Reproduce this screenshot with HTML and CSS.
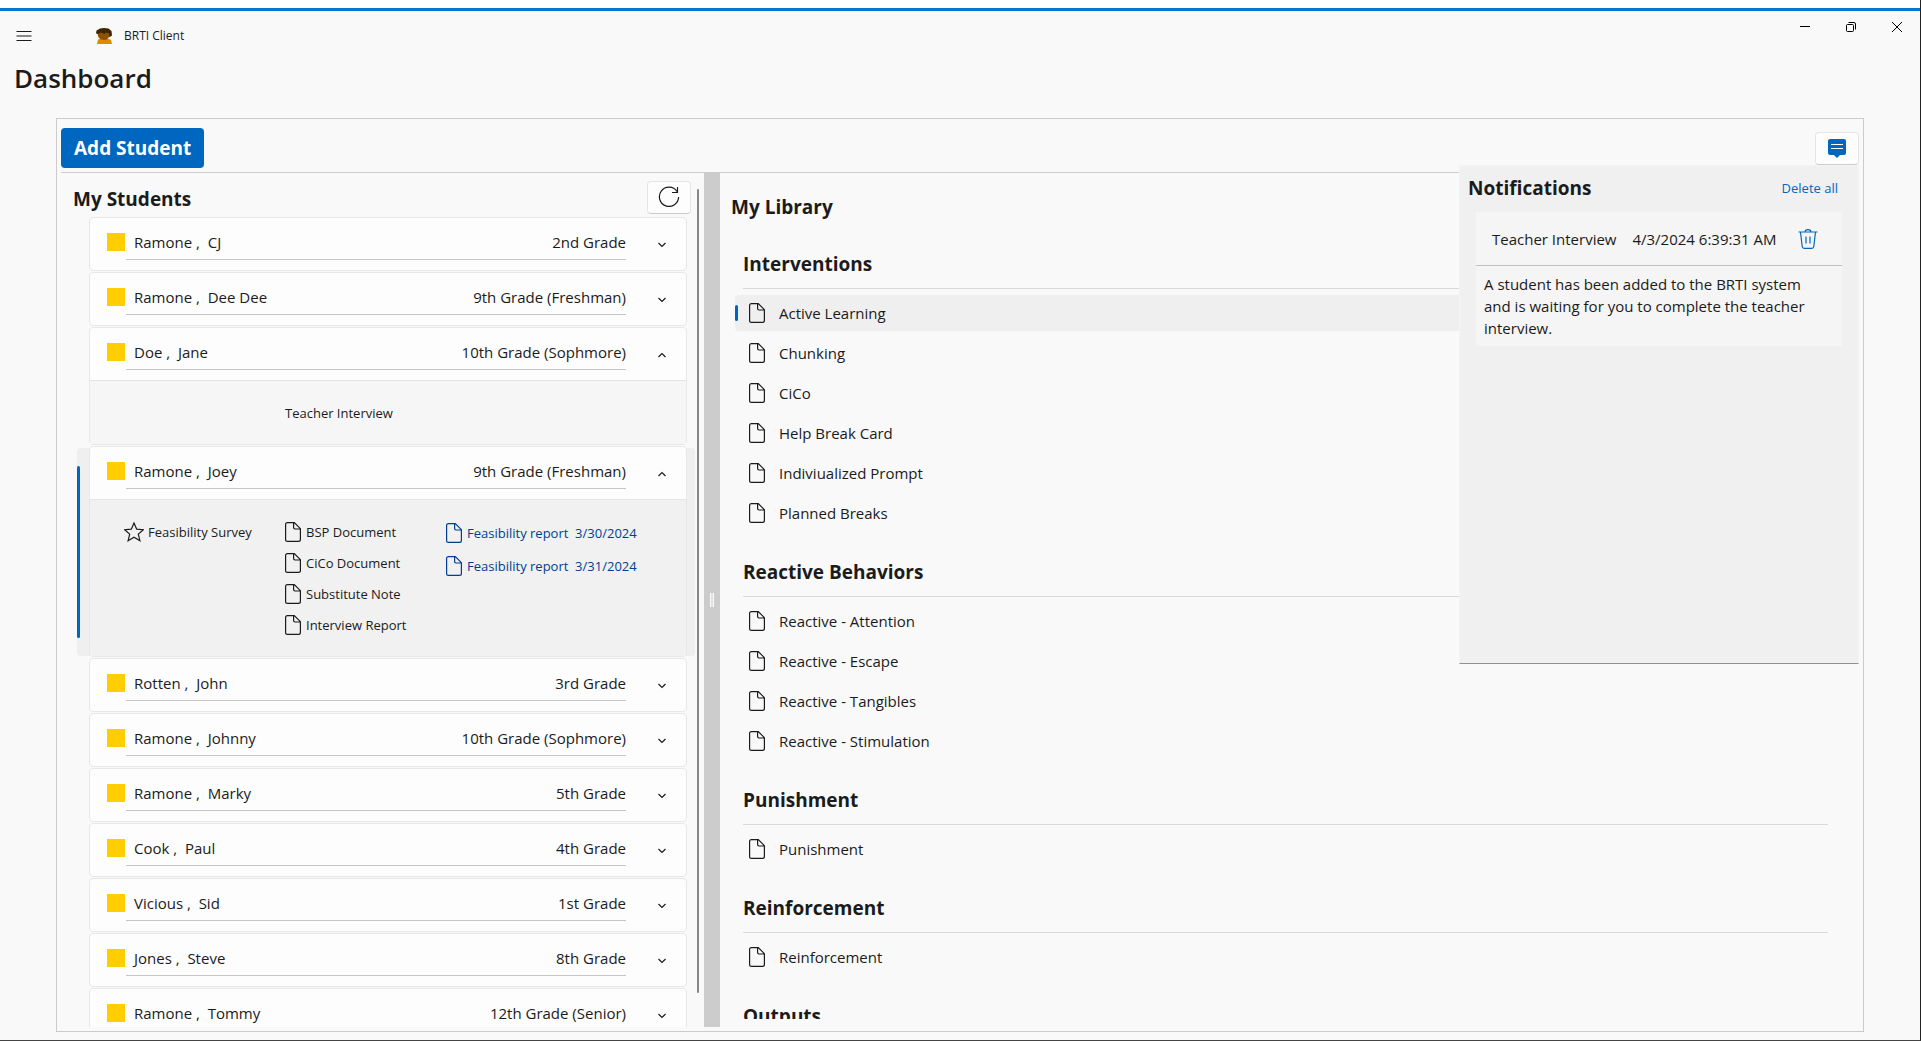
FILE: index.html
```html
<!DOCTYPE html>
<html lang="en">
<head>
    <meta charset="UTF-8">
    <meta name="viewport" content="width=device-width, initial-scale=1.0">
    <title>BRTI Client</title>
    <link rel="stylesheet" href="styles.css">
</head>
<body>
    <svg class="sprite" aria-hidden="true">
        <symbol id="i-doc" viewBox="0 0 16 20">
            <path d="M2.500 0.600H9.300L15.400 6.700V17.500Q15.400 19.400 13.500 19.400H2.500Q0.600 19.400 0.600 17.500V2.500Q0.600 0.600 2.500 0.600ZM8.600 0.600V5.600Q8.600 7 10 7H15.400"/>
        </symbol>
        <symbol id="i-down" viewBox="0 0 10 6">
            <path d="M1.500 1L5 4.500L8.500 1"/>
        </symbol>
        <symbol id="i-up" viewBox="0 0 10 6">
            <path d="M1.500 5L5 1.500L8.500 5"/>
        </symbol>
    </svg>

    <header class="title-bar">
        <button class="menu-btn" aria-label="Menu">
            <svg width="16" height="12" viewBox="0 0 16 12"><path d="M0.500 1.500H15.500M0.500 6H15.500M0.500 10.500H15.500"/></svg>
        </button>
        <svg class="app-icon" width="16" height="16" viewBox="0 0 16 16">
            <path fill="#e08a00" d="M1 16L2 11.500L5 10.500H12L15 12L16 16Z"/>
            <path fill="#8f5200" d="M1.500 4H14V7.500Q14 9 12.500 9.500Q11.500 12 8 12Q4.500 12 3 10Q1.500 8 1.500 4Z"/>
            <path fill="#3d2600" d="M0 5.500L0.500 2.500L4 0.500L8 0L12.500 0.500L15.500 3L16 7.500L14.500 8.500L13.500 9.500L13 5.500L10 4.500L8.500 6L5 4.500L2 6Z"/>
        </svg>
        <span class="app-name">BRTI Client</span>
        <div class="window-btns">
            <button aria-label="Minimize"><svg width="10" height="10" viewBox="0 0 10 10"><path d="M0 4.500H10"/></svg></button>
            <button aria-label="Restore"><svg width="10" height="10" viewBox="0 0 10 10"><rect x="0.500" y="2.500" width="7" height="7" rx="1"/><path d="M2.500 0.500H8Q9.500 0.500 9.500 2V7.500"/></svg></button>
            <button aria-label="Close"><svg width="10" height="10" viewBox="0 0 10 10"><path d="M0 0L10 10M10 0L0 10"/></svg></button>
        </div>
    </header>

    <h1>Dashboard</h1>

    <main class="panel">
        <div class="toolbar">
            <button class="add-btn">Add Student</button>
            <button class="icon-btn notify-btn" aria-label="Notifications">
                <svg width="18" height="19" viewBox="0 0 18 19">
                    <path fill="#0067c0" d="M2 0H16Q18 0 18 2V14Q18 16 16 16H12L9 19L6 16H2Q0 16 0 14V2Q0 0 2 0Z"/>
                    <path stroke="#fff" d="M3 5.500H15M3 9.500H15"/>
                </svg>
            </button>
        </div>

        <div class="columns">
            <section class="students">
                <div class="students-head">
                    <h2>My Students</h2>
                    <button class="icon-btn" aria-label="Refresh">
                        <svg width="22" height="22" viewBox="0 0 22 22"><path d="M19 5.500A9.600 9.600 0 1 0 20.600 11M19.500 1V6.500H14"/></svg>
                    </button>
                </div>
                <ul class="student-list">
                    <li>
                        <div class="card">
                            <div class="card-head"><i class="swatch"></i><div class="card-line"><span>Ramone ,&nbsp; CJ</span><span>2nd Grade</span></div><button aria-label="Expand"><svg><use href="#i-down"/></svg></button></div>
                        </div>
                    </li>
                    <li>
                        <div class="card">
                            <div class="card-head"><i class="swatch"></i><div class="card-line"><span>Ramone ,&nbsp; Dee Dee</span><span>9th Grade (Freshman)</span></div><button aria-label="Expand"><svg><use href="#i-down"/></svg></button></div>
                        </div>
                    </li>
                    <li>
                        <div class="card">
                            <div class="card-head"><i class="swatch"></i><div class="card-line"><span>Doe ,&nbsp; Jane</span><span>10th Grade (Sophmore)</span></div><button aria-label="Collapse"><svg><use href="#i-up"/></svg></button></div>
                            <div class="card-body">
                                <div></div>
                                <div><button class="doc-btn">Teacher Interview</button></div>
                            </div>
                        </div>
                    </li>
                    <li class="selected">
                        <div class="card">
                            <div class="card-head"><i class="swatch"></i><div class="card-line"><span>Ramone ,&nbsp; Joey</span><span>9th Grade (Freshman)</span></div><button aria-label="Collapse"><svg><use href="#i-up"/></svg></button></div>
                            <div class="card-body">
                                <div>
                                    <button class="doc-btn survey-btn"><svg viewBox="0 0 20 20"><path d="M10 1L12.700 7.200L19.300 7.700L14.300 12.100L15.900 18.700L10 15.200L4.100 18.700L5.700 12.100L0.700 7.700L7.300 7.200Z"/></svg>Feasibility Survey</button>
                                </div>
                                <div>
                                    <button class="doc-btn"><svg><use href="#i-doc"/></svg>BSP Document</button>
                                    <button class="doc-btn"><svg><use href="#i-doc"/></svg>CiCo Document</button>
                                    <button class="doc-btn"><svg><use href="#i-doc"/></svg>Substitute Note</button>
                                    <button class="doc-btn"><svg><use href="#i-doc"/></svg>Interview Report</button>
                                </div>
                                <div class="reports">
                                    <a class="doc-btn" href="#"><svg><use href="#i-doc"/></svg>Feasibility report&nbsp; 3/30/2024</a>
                                    <a class="doc-btn" href="#"><svg><use href="#i-doc"/></svg>Feasibility report&nbsp; 3/31/2024</a>
                                </div>
                            </div>
                        </div>
                    </li>
                    <li>
                        <div class="card">
                            <div class="card-head"><i class="swatch"></i><div class="card-line"><span>Rotten ,&nbsp; John</span><span>3rd Grade</span></div><button aria-label="Expand"><svg><use href="#i-down"/></svg></button></div>
                        </div>
                    </li>
                    <li>
                        <div class="card">
                            <div class="card-head"><i class="swatch"></i><div class="card-line"><span>Ramone ,&nbsp; Johnny</span><span>10th Grade (Sophmore)</span></div><button aria-label="Expand"><svg><use href="#i-down"/></svg></button></div>
                        </div>
                    </li>
                    <li>
                        <div class="card">
                            <div class="card-head"><i class="swatch"></i><div class="card-line"><span>Ramone ,&nbsp; Marky</span><span>5th Grade</span></div><button aria-label="Expand"><svg><use href="#i-down"/></svg></button></div>
                        </div>
                    </li>
                    <li>
                        <div class="card">
                            <div class="card-head"><i class="swatch"></i><div class="card-line"><span>Cook ,&nbsp; Paul</span><span>4th Grade</span></div><button aria-label="Expand"><svg><use href="#i-down"/></svg></button></div>
                        </div>
                    </li>
                    <li>
                        <div class="card">
                            <div class="card-head"><i class="swatch"></i><div class="card-line"><span>Vicious ,&nbsp; Sid</span><span>1st Grade</span></div><button aria-label="Expand"><svg><use href="#i-down"/></svg></button></div>
                        </div>
                    </li>
                    <li>
                        <div class="card">
                            <div class="card-head"><i class="swatch"></i><div class="card-line"><span>Jones ,&nbsp; Steve</span><span>8th Grade</span></div><button aria-label="Expand"><svg><use href="#i-down"/></svg></button></div>
                        </div>
                    </li>
                    <li>
                        <div class="card">
                            <div class="card-head"><i class="swatch"></i><div class="card-line"><span>Ramone ,&nbsp; Tommy</span><span>12th Grade (Senior)</span></div><button aria-label="Expand"><svg><use href="#i-down"/></svg></button></div>
                        </div>
                    </li>
                </ul>
                <div class="scroll-thumb"></div>
            </section>

            <div class="splitter"><span class="grip"></span></div>

            <section class="library">
                <h2>My Library</h2>
                <h3>Interventions</h3>
                <ul>
                    <li class="active"><svg><use href="#i-doc"/></svg>Active Learning</li>
                    <li><svg><use href="#i-doc"/></svg>Chunking</li>
                    <li><svg><use href="#i-doc"/></svg>CiCo</li>
                    <li><svg><use href="#i-doc"/></svg>Help Break Card</li>
                    <li><svg><use href="#i-doc"/></svg>Indiviualized Prompt</li>
                    <li><svg><use href="#i-doc"/></svg>Planned Breaks</li>
                </ul>
                <h3>Reactive Behaviors</h3>
                <ul>
                    <li><svg><use href="#i-doc"/></svg>Reactive - Attention</li>
                    <li><svg><use href="#i-doc"/></svg>Reactive - Escape</li>
                    <li><svg><use href="#i-doc"/></svg>Reactive - Tangibles</li>
                    <li><svg><use href="#i-doc"/></svg>Reactive - Stimulation</li>
                </ul>
                <h3>Punishment</h3>
                <ul>
                    <li><svg><use href="#i-doc"/></svg>Punishment</li>
                </ul>
                <h3>Reinforcement</h3>
                <ul>
                    <li><svg><use href="#i-doc"/></svg>Reinforcement</li>
                </ul>
                <h3>Outputs</h3>
            </section>
        </div>

        <aside class="notifications">
            <div class="notifications-head">
                <h2>Notifications</h2>
                <button class="link-btn">Delete all</button>
            </div>
            <article class="note">
                <div class="note-head">
                    <span>Teacher Interview</span>
                    <time>4/3/2024 6:39:31 AM</time>
                    <button aria-label="Delete">
                        <svg width="20" height="20" viewBox="0 0 20 20"><path d="M0.500 3H19.500M7 3Q7 0.700 10 0.700Q13 0.700 13 3M2.500 3L4.200 17.500Q4.500 19.300 6.200 19.300H13.800Q15.500 19.300 15.800 17.500L17.500 3M8 7.500V14.500M12 7.500V14.500"/></svg>
                    </button>
                </div>
                <p>A student has been added to the BRTI system and is waiting for you to complete the teacher interview.</p>
            </article>
        </aside>
    </main>
</body>
</html>
```

FILE: styles.css
```css
* {
    box-sizing: border-box;
}
body {
    display: flex;
    flex-direction: column;
    height: 100vh;
    margin: 0;
    border-right: 1px solid #222;
    border-bottom: 1px solid #444;
    background-color: #f9f9f9;
    color: #1b1b1b;
    font-family: "Open Sans", "Noto Sans", sans-serif;
    font-size: 15px;
    line-height: 20px;
    overflow: hidden;
}
body::before {
    content: "";
    flex: none;
    height: 8px;
    background-color: #fff;
    border-bottom: 3px solid #0078d4;
}
h1, h2, h3, ul, p {
    margin: 0;
    padding: 0;
}
ul {
    list-style: none;
}
svg {
    flex: none;
    fill: none;
    stroke: currentColor;
    stroke-width: 1.2;
}
button {
    padding: 0;
    border: none;
    background: none;
    color: inherit;
    font: inherit;
    cursor: pointer;
}
h2, h3 {
    font-size: 19px;
    line-height: 28px;
    font-weight: bold;
}
.sprite {
    position: absolute;
    width: 0;
    height: 0;
}

/* title bar */
.title-bar {
    display: flex;
    align-items: center;
    flex: none;
    height: 50px;
    padding-left: 16px;
}
.title-bar svg {
    stroke-width: 1;
}
.menu-btn {
    display: flex;
    margin-right: 64px;
}
.title-bar .app-icon {
    stroke: none;
    margin-right: 12px;
}
.app-name {
    font-size: 12px;
}
.window-btns {
    display: flex;
    align-self: flex-start;
    margin-left: auto;
    color: #000;
}
.window-btns button {
    display: flex;
    align-items: center;
    justify-content: center;
    width: 46px;
    height: 32px;
}
h1 {
    flex: none;
    padding-left: 14px;
    font-size: 26px;
    line-height: 34px;
    font-weight: 600;
}

/* dashboard panel */
.panel {
    position: relative;
    display: flex;
    flex-direction: column;
    flex: 1;
    min-height: 0;
    margin: 23px 56px 8px;
    padding: 9px 4px 4px;
    border: 1px solid #ccc;
}
.toolbar {
    display: flex;
    align-items: center;
    justify-content: space-between;
    flex: none;
    padding-bottom: 4px;
    border-bottom: 1px solid #ccc;
}
.add-btn {
    height: 40px;
    padding: 0 13px;
    border-radius: 4px;
    background-color: #0067c0;
    color: #fff;
    font-size: 19px;
    font-weight: bold;
}
.icon-btn {
    display: flex;
    align-items: center;
    justify-content: center;
    width: 44px;
    height: 33px;
    border: 1px solid #e5e5e5;
    border-bottom-color: #ccc;
    border-radius: 4px;
    background-color: #fdfdfd;
}
.notify-btn svg {
    stroke: none;
}
.columns {
    display: flex;
    flex: 1;
    min-height: 0;
}

/* students */
.students {
    position: relative;
    flex: none;
    width: 643px;
    overflow: hidden;
}
.students-head {
    display: flex;
    justify-content: space-between;
    align-items: center;
    height: 44px;
    padding: 4px 13px 0 12px;
}
.students-head h2 {
    padding-top: 4px;
}
.student-list {
    padding: 0 9px 0 16px;
}
.student-list li {
    position: relative;
    padding: 0 8px 1px 12px;
}
.selected::before {
    content: "";
    position: absolute;
    inset: 2px 0;
    border-radius: 4px;
    background-color: #efefef;
}
.selected::after {
    content: "";
    position: absolute;
    left: 0;
    top: 20px;
    bottom: 20px;
    width: 3px;
    border-radius: 2px;
    background-color: #0067c0;
}
.card {
    position: relative;
    border: 1px solid #e8e8e8;
    border-radius: 4px;
    background-color: #fdfdfd;
}
.card-head {
    display: flex;
    align-items: center;
    height: 52px;
    padding: 0 0 4px 17px;
}
.swatch {
    width: 18px;
    height: 18px;
    background-color: #ffce00;
}
.card-line {
    display: flex;
    justify-content: space-between;
    flex: 1;
    margin-left: 1px;
    padding: 7px 0 7px 8px;
    border-bottom: 1px solid #c6c6c6;
}
.card-head button {
    display: flex;
    justify-content: center;
    width: 60px;
    padding: 6px 0 0 12px;
}
.card-head button svg {
    width: 10px;
    height: 6px;
}
.card-body {
    display: grid;
    grid-template-columns: 161px 161px 1fr;
    padding: 16px 16px 16px 34px;
    border-top: 1px solid #e5e5e5;
    background-color: #f6f6f6;
    font-size: 13px;
}
.selected .card-body {
    background-color: #f1f1f1;
}
.doc-btn {
    display: flex;
    align-items: center;
    gap: 5px;
    height: 31px;
    color: inherit;
    text-decoration: none;
    white-space: nowrap;
}
.doc-btn svg {
    width: 16px;
    height: 20px;
}
.survey-btn {
    gap: 4px;
}
.survey-btn svg {
    width: 20px;
}
.reports {
    color: #003e92;
}
.reports .doc-btn {
    height: 33px;
}
.scroll-thumb {
    position: absolute;
    right: 5px;
    top: 16px;
    bottom: 34px;
    width: 2px;
    border-radius: 1px;
    background-color: #868686;
}

.splitter {
    display: flex;
    align-items: center;
    justify-content: center;
    flex: none;
    width: 16px;
    background-color: #ccc;
}
.grip {
    width: 4px;
    height: 14px;
    border: solid #f9f9f9;
    border-width: 0 1px;
    background-color: #e0e0e0;
}

/* library */
.library {
    flex: 1;
    margin-bottom: 8px;
    padding: 20px 23px 0 15px;
    overflow: hidden;
}
.library h2 {
    margin: 0 0 6px -4px;
}
.library h3 {
    margin: 0 8px 6px;
    padding: 23px 0 10px;
    border-bottom: 1px solid #d9d9d9;
}
.library li {
    position: relative;
    display: flex;
    align-items: center;
    gap: 14px;
    height: 36px;
    margin-bottom: 4px;
    padding: 0 14px;
    border-radius: 4px;
}
.library li svg {
    width: 16px;
    height: 20px;
}
.library .active {
    background-color: #efefef;
}
.active::before {
    content: "";
    position: absolute;
    left: 0;
    top: 10px;
    width: 3px;
    height: 16px;
    border-radius: 2px;
    background-color: #0067c0;
}

/* notifications flyout */
.notifications {
    position: absolute;
    top: 46px;
    right: 4px;
    width: 400px;
    height: 499px;
    padding: 8px 16px 0;
    border: 1px solid #f4f4f4;
    border-bottom-color: #919191;
    background-color: #f0f0f0;
}
.notifications-head {
    display: flex;
    align-items: center;
    justify-content: space-between;
    margin: 0 4px 0 -8px;
}
.link-btn {
    color: #0067c0;
    font-size: 13px;
}
.note {
    margin-top: 10px;
    background-color: #f5f5f5;
}
.note-head {
    display: flex;
    align-items: center;
    gap: 16px;
    height: 54px;
    padding-left: 16px;
    border-bottom: 1px solid #c0c0c0;
}
.note-head button {
    display: flex;
    margin-left: 6px;
    color: #0067c0;
}
.note p {
    padding: 7px 16px 7px 8px;
    line-height: 22px;
}
```
